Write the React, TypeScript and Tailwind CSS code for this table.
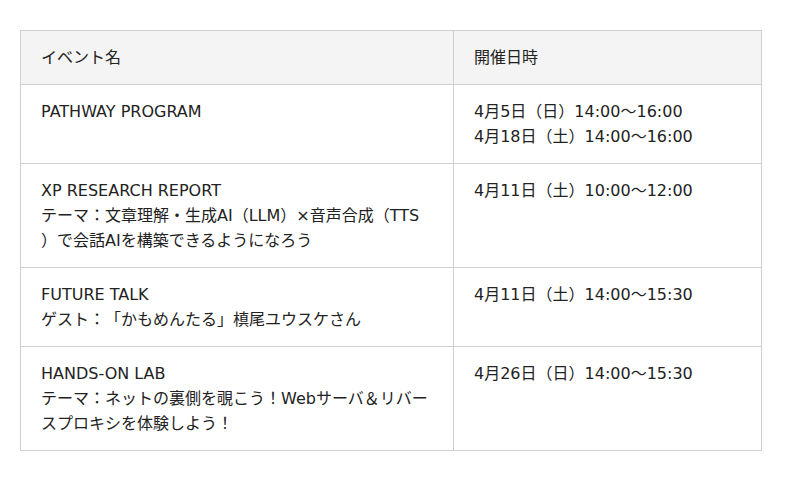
const events = [
  {
    name: ['PATHWAY PROGRAM'],
    dates: ['4月5日（日）14:00〜16:00', '4月18日（土）14:00〜16:00'],
  },
  {
    name: [
      'XP RESEARCH REPORT',
      'テーマ：文章理解・生成AI（LLM）×音声合成（TTS',
      '）で会話AIを構築できるようになろう',
    ],
    dates: ['4月11日（土）10:00〜12:00'],
  },
  {
    name: ['FUTURE TALK', 'ゲスト：「かもめんたる」槙尾ユウスケさん'],
    dates: ['4月11日（土）14:00〜15:30'],
  },
  {
    name: [
      'HANDS-ON LAB',
      'テーマ：ネットの裏側を覗こう！Webサーバ＆リバー',
      'スプロキシを体験しよう！',
    ],
    dates: ['4月26日（日）14:00〜15:30'],
  },
];

function Lines({ items }: { items: string[] }) {
  return (
    <>
      {items.map((t, i) => (
        <span key={i} className="block whitespace-nowrap">
          {t}
        </span>
      ))}
    </>
  );
}

export default function App() {
  return (
    <div
      lang="ja"
      className="min-h-[481px] w-[800px] bg-white pl-5 pt-[30px] font-['DejaVu_Sans','Noto_Sans_CJK_JP',sans-serif] text-[16px] leading-[25px] text-[#222] [text-spacing-trim:space-all]"
    >
      <table className="w-[742px] table-fixed border-collapse">
        <thead>
          <tr className="bg-[#f4f4f4]">
            <th className="w-[433px] border border-[#cfcfcf] px-5 py-[14px] text-left font-normal">
              イベント名
            </th>
            <th className="border border-[#cfcfcf] px-5 py-[14px] text-left font-normal">
              開催日時
            </th>
          </tr>
        </thead>
        <tbody>
          {events.map((e, i) => (
            <tr key={i}>
              <td className="border border-[#cfcfcf] px-5 py-[14px] align-top">
                <Lines items={e.name} />
                {e.name.length === 1 && <span className="block">&nbsp;</span>}
              </td>
              <td className="border border-[#cfcfcf] px-5 py-[14px] align-top">
                <Lines items={e.dates} />
              </td>
            </tr>
          ))}
        </tbody>
      </table>
    </div>
  );
}
